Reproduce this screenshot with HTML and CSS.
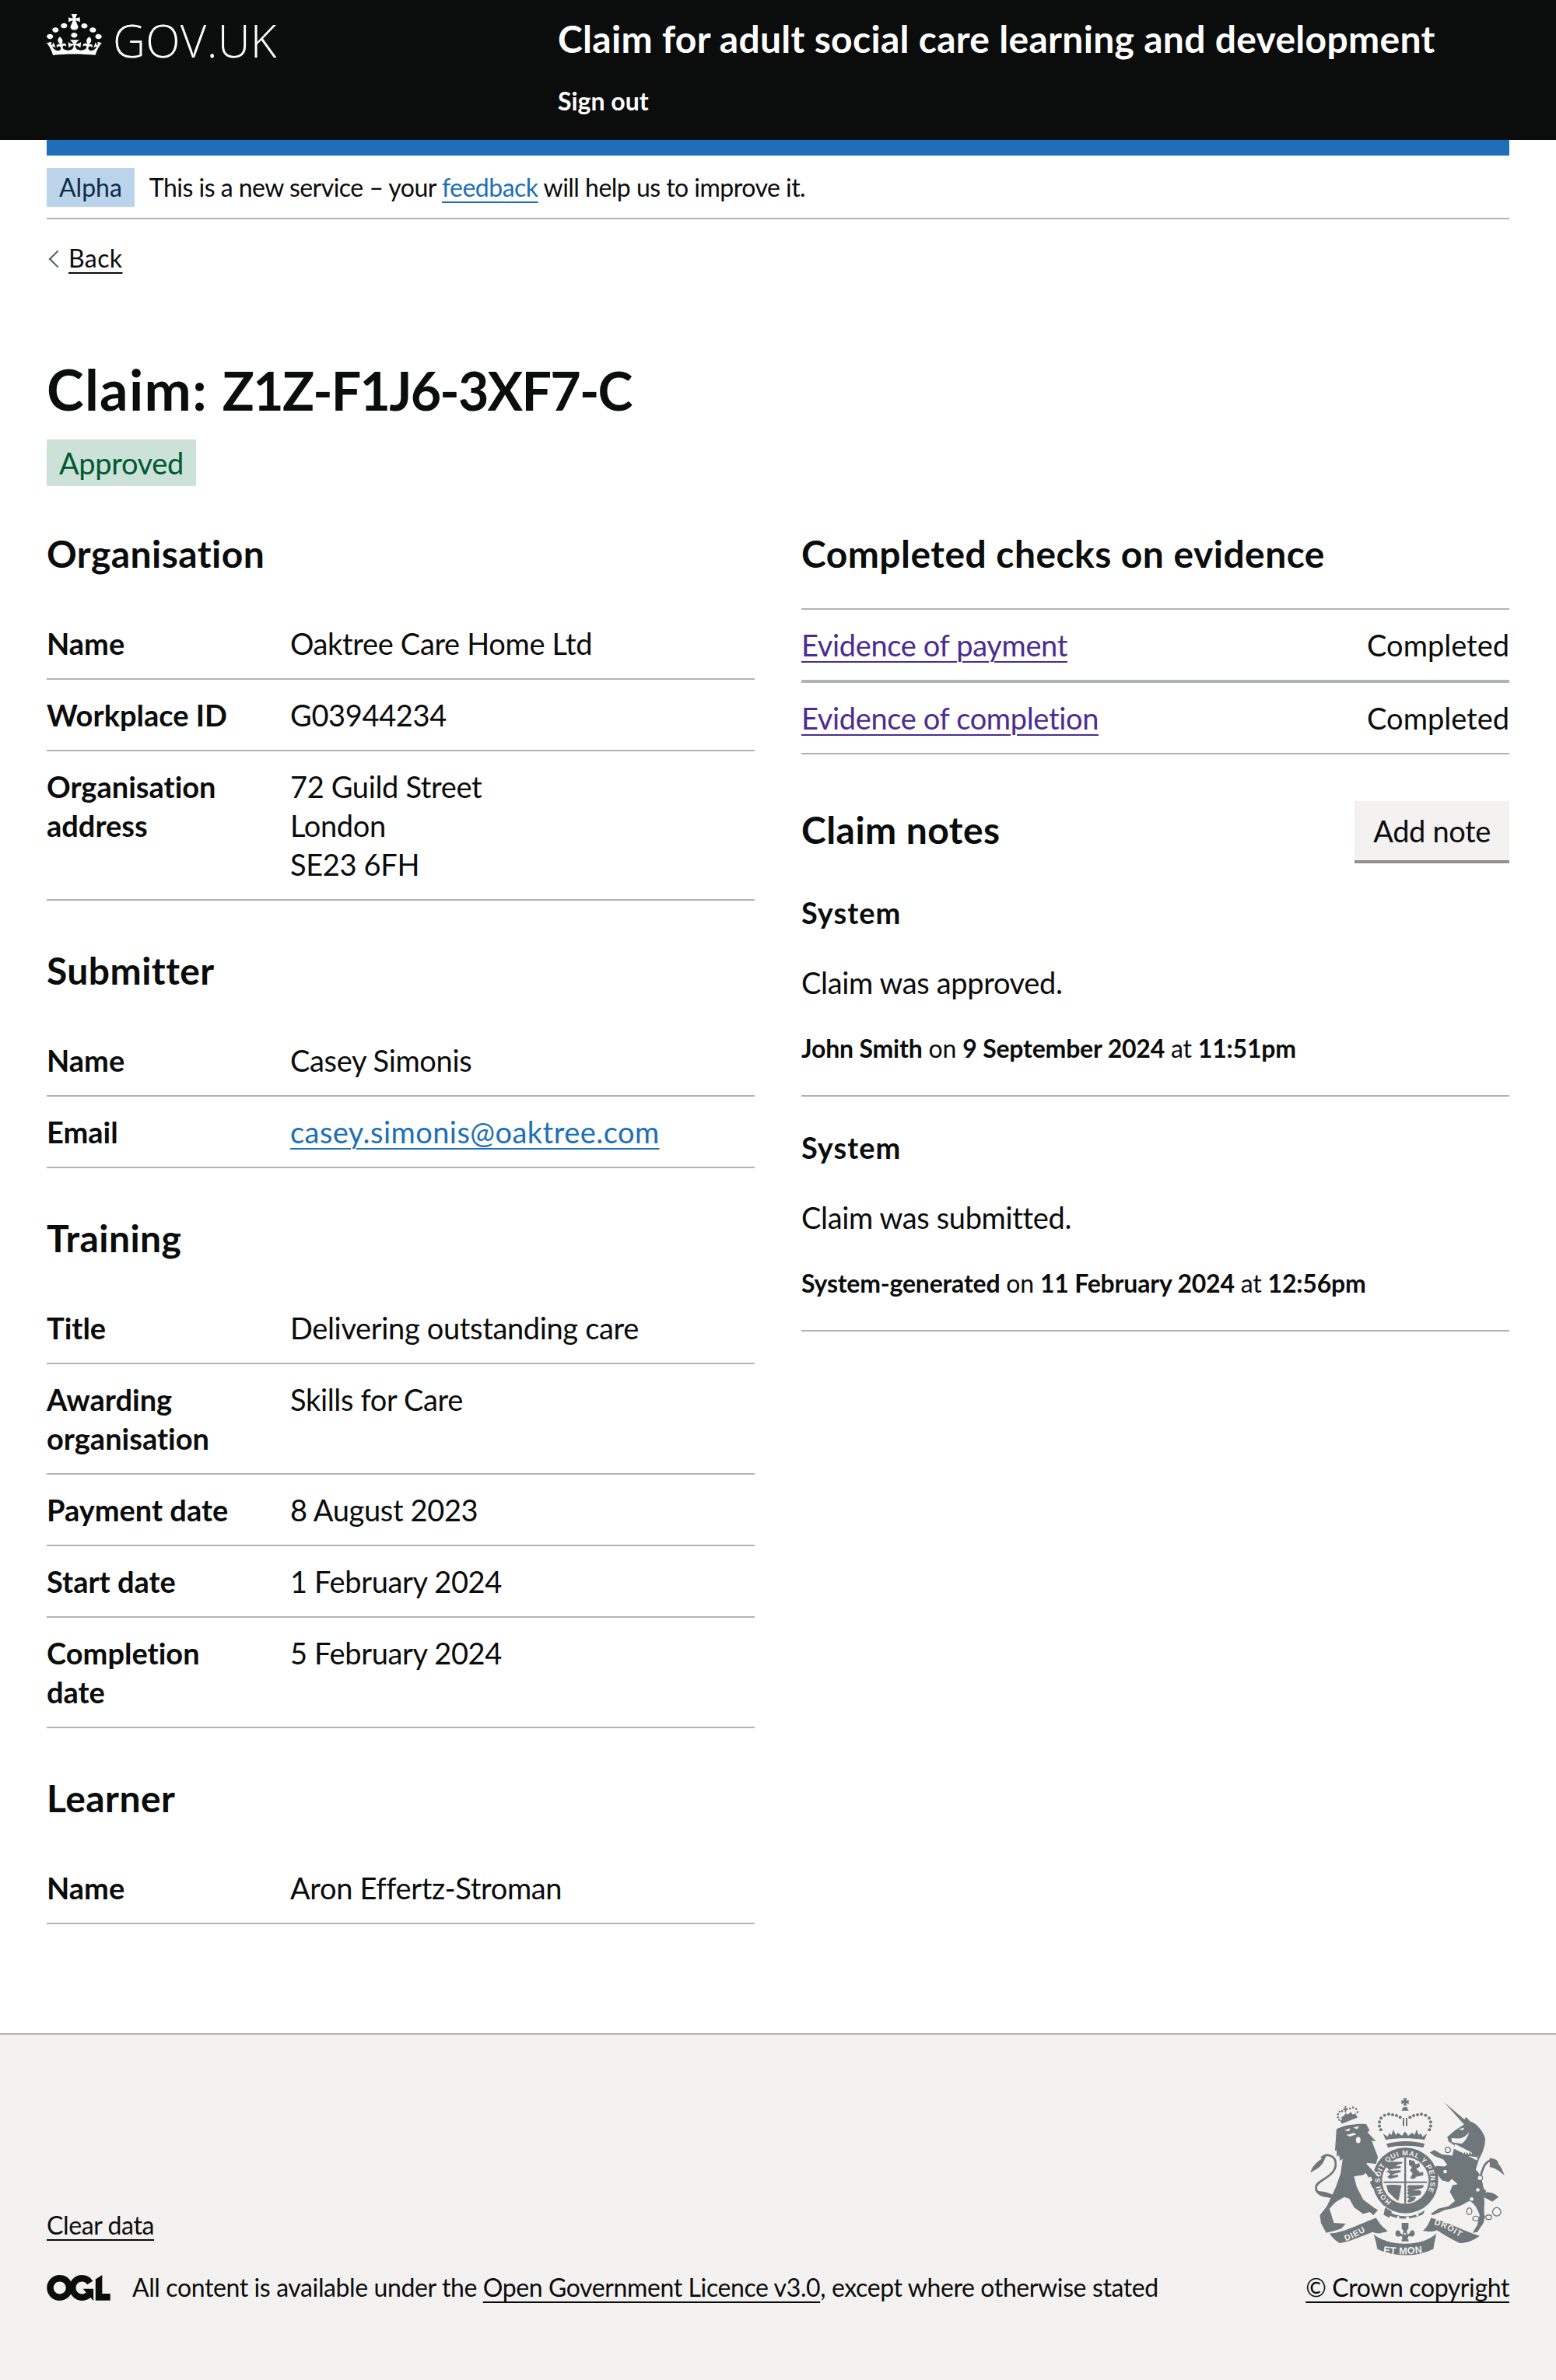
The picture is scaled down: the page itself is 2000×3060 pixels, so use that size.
FILE: index.html
```html
<!DOCTYPE html>
<html lang="en">
<head>
<meta charset="utf-8">
<title>Claim: Z1Z-F1J6-3XF7-C</title>
<link rel="stylesheet" href="styles.css">
</head>
<body>
<header class="site-header">
  <div class="wrap header-inner">
    <a class="logo" href="#">
      <svg class="crown" viewBox="0 -0.5 33 30.5" preserveAspectRatio="none" aria-hidden="true"><path fill="#fff" d="M22.6 10.4c-1 .4-2-.1-2.4-1-.4-.9.1-2 1-2.4.9-.4 2 .1 2.4 1s-.1 2-1 2.4m-5.9 6.7c-.9.4-2-.1-2.4-1-.4-.9.1-2 1-2.4.9-.4 2 .1 2.4 1s-.1 2-1 2.4m10.8-3.7c-1 .4-2-.1-2.4-1-.4-.9.1-2 1-2.4.9-.4 2 .1 2.4 1s0 2-1 2.4m3.3 4.8c-1 .4-2-.1-2.4-1-.4-.9.1-2 1-2.4.9-.4 2 .1 2.4 1s-.1 2-1 2.4M17 4.7l2.3 1.2V2.5l-2.3.7-.2-.2.9-3h-3.4l.9 3-.2.2c-.1.1-2.3-.7-2.3-.7v3.4L15 4.7c.1.1.1.2.2.2l-1.3 4c-.1.2-.1.4-.1.6 0 1.1.8 2 1.9 2.2h.7c1-.2 1.9-1.1 1.9-2.2 0-.2 0-.4-.1-.6l-1.3-4c-.1-.1 0-.2.1-.3m-7.6 5.7c.9.4 2-.1 2.4-1 .4-.9-.1-2-1-2.4-.9-.4-2 .1-2.4 1s0 2 1 2.4m-5 3c.9.4 2-.1 2.4-1 .4-.9-.1-2-1-2.4-.9-.4-2 .1-2.4 1s.1 2 1 2.4m-3.2 4.8c.9.4 2-.1 2.4-1 .4-1-.1-2-1-2.4-.9-.3-2 .1-2.4 1-.4.9.1 2 1 2.4m14.8 11c4.4 0 8.6.3 12.3.8 1.1-4.5 2.4-7 3.7-8.8l-2.5-.9c.2 1.3.3 1.9 0 2.7-.4-.4-.8-1.1-1.1-2.3l-1.2 4c.7-.5 1.3-.8 2-.9-1.1 2.5-2.6 3.1-3.5 3-1.1-.2-1.7-1.2-1.5-2.1.3-1.2 1.5-1.5 2.1-.1 1.1-2.3-.8-3-2-2.3 1.9-1.9 2.1-3.5.6-5.6-2.1 1.6-2.1 3.2-1.2 5.5-1.2-1.4-3.2-.6-2.5 1.6.9-1.4 2.1-.5 1.9.8-.2 1.1-1.7 2.1-3.5 1.9-2.7-.2-2.9-2.1-2.9-3.6.7-.1 1.9.5 2.9 1.9l.4-4.3c-1.1 1.1-2.1 1.4-3.2 1.4.4-1.2 2.1-3 2.1-3h-5.4s1.7 1.9 2.1 3c-1.1 0-2.1-.2-3.2-1.4l.4 4.3c1-1.4 2.2-2 2.9-1.9-.1 1.5-.2 3.4-2.9 3.6-1.9.2-3.4-.8-3.5-1.9-.2-1.3 1-2.2 1.9-.8.7-2.3-1.2-3-2.5-1.6.9-2.2.9-3.9-1.2-5.5-1.5 2-1.3 3.7.6 5.6-1.2-.7-3.1 0-2 2.3.6-1.4 1.8-1.1 2.1.1.2.9-.3 1.9-1.5 2.1-.9.2-2.4-.5-3.5-3 .6 0 1.2.3 2 .9l-1.2-4c-.3 1.1-.7 1.9-1.1 2.3-.3-.8-.2-1.4 0-2.7l-2.9.9C1.3 23 2.6 25.5 3.7 30c3.7-.5 7.9-.8 12.3-.8"/></svg>
      <span class="logo-text">GOV.UK</span>
    </a>
    <div class="service">
      <a class="service-name" href="#">Claim for adult social care learning and development</a>
      <a class="sign-out" href="#">Sign out</a>
    </div>
  </div>
</header>

<div class="wrap">
  <div class="phase-banner">
    <strong class="phase-tag">Alpha</strong>
    <span class="phase-text">This is a new service – your <a class="link" href="#">feedback</a> will help us to improve it.</span>
  </div>
  <a class="back-link" href="#">Back</a>

  <main class="main">
    <h1 class="title">Claim: <span class="claim-id">Z1Z-F1J6-3XF7-C</span></h1>
    <strong class="status-tag">Approved</strong>

    <div class="columns">
      <div class="col">
        <h2 class="heading">Organisation</h2>
        <dl class="summary">
          <div class="row"><dt>Name</dt><dd>Oaktree Care Home Ltd</dd></div>
          <div class="row"><dt>Workplace ID</dt><dd>G03944234</dd></div>
          <div class="row"><dt>Organisation address</dt><dd>72 Guild Street<br>London<br>SE23 6FH</dd></div>
        </dl>
        <h2 class="heading">Submitter</h2>
        <dl class="summary">
          <div class="row"><dt>Name</dt><dd>Casey Simonis</dd></div>
          <div class="row"><dt>Email</dt><dd><a class="link email" href="#">casey.simonis@oaktree.com</a></dd></div>
        </dl>
        <h2 class="heading">Training</h2>
        <dl class="summary">
          <div class="row"><dt>Title</dt><dd>Delivering outstanding care</dd></div>
          <div class="row"><dt>Awarding organisation</dt><dd>Skills for Care</dd></div>
          <div class="row"><dt>Payment date</dt><dd>8 August 2023</dd></div>
          <div class="row"><dt>Start date</dt><dd>1 February 2024</dd></div>
          <div class="row"><dt>Completion date</dt><dd>5 February 2024</dd></div>
        </dl>
        <h2 class="heading">Learner</h2>
        <dl class="summary">
          <div class="row"><dt>Name</dt><dd>Aron Effertz-Stroman</dd></div>
        </dl>
      </div>

      <div class="col">
        <h2 class="heading">Completed checks on evidence</h2>
        <ul class="checks">
          <li class="check"><a class="link visited" href="#">Evidence of payment</a><span class="check-status">Completed</span></li>
          <li class="check"><a class="link visited" href="#">Evidence of completion</a><span class="check-status">Completed</span></li>
        </ul>
        <div class="notes-head">
          <h2 class="heading notes-title">Claim notes</h2>
          <a class="button" href="#">Add note</a>
        </div>
        <article class="note">
          <h3 class="note-title">System</h3>
          <p class="note-body">Claim was approved.</p>
          <p class="note-meta"><b>John Smith</b> on <b>9 September 2024</b> at <b>11:51pm</b></p>
        </article>
        <article class="note">
          <h3 class="note-title">System</h3>
          <p class="note-body">Claim was submitted.</p>
          <p class="note-meta"><b>System-generated</b> on <b>11 February 2024</b> at <b>12:56pm</b></p>
        </article>
      </div>
    </div>
  </main>
</div>

<footer class="footer">
  <div class="wrap footer-inner">
    <div class="footer-left">
      <a class="foot-link clear" href="#">Clear data</a>
      <div class="licence">
        <svg class="ogl" viewBox="0 0 483.2 195.7" aria-hidden="true"><path fill="#0b0c0c" d="M421.5 142.8V.1l-50.7 32.3v161.1h112.4v-50.7zm-122.3-9.6A47.12 47.12 0 0 1 221 97.8c0-26 21.1-47.1 47.1-47.1 16.7 0 31.4 8.7 39.7 21.8l42.7-27.2A97.63 97.63 0 0 0 268.1 0c-36.5 0-68.3 20.1-85.1 49.7A98 98 0 0 0 97.8 0C43.9 0 0 43.9 0 97.8s43.9 97.8 97.8 97.8c36.5 0 68.3-20.1 85.1-49.7a97.76 97.76 0 0 0 149.6 25.4l19.4 22.2h3v-87.8h-80l24.3 27.5zM97.8 145c-26 0-47.1-21.1-47.1-47.1s21.1-47.1 47.1-47.1 47.2 21 47.2 47S123.8 145 97.8 145"/></svg>
        <span>All content is available under the <a class="foot-link" href="#">Open Government Licence v3.0</a>, except where otherwise stated</span>
      </div>
    </div>
    <div class="footer-right">
      <svg class="crest" viewBox="125 100 765 625" aria-hidden="true">
        <defs>
          <path id="ring" d="M444 507 A97 97 0 1 1 566 495"/>
          <path id="rib-l" d="M268 660 Q320 640 372 604"/>
          <path id="rib-c" d="M412 706 Q495 718 584 702"/>
          <path id="rib-r" d="M608 596 Q670 612 732 664"/>
        </defs>
        <g fill="#6f777b">
          <path d="M490 108h14l-3 10 10-3v15l-10-3 3 10h-14l3-10-10 3v-15l10 3zM483 156l8-14h12l8 14z"/>
          <path d="M488 184h6v32h-6zM500 184h6v32h-6z"/>
          <path d="M412 245l18 12 6-14 8 8 8-22 9 22 8-10 16 12 12-16 12 16 16-12 8 10 9-22 8 22 8-8 6 14 18-12-10 24c-50-8-104-8-150 0z"/>
          <path d="M425 285c44-14 108-14 148 0l-6 14c-40-10-96-10-136 0z"/>
          <g>
            <circle cx="398" cy="200" r="6"/><circle cx="404" cy="185" r="6"/><circle cx="418" cy="174" r="6"/><circle cx="434" cy="170" r="6"/><circle cx="449" cy="172" r="6"/><circle cx="464" cy="175" r="6"/><circle cx="478" cy="182" r="6"/>
            <circle cx="398" cy="216" r="6"/><circle cx="403" cy="230" r="6"/>
            <circle cx="596" cy="200" r="6"/><circle cx="590" cy="185" r="6"/><circle cx="576" cy="174" r="6"/><circle cx="560" cy="170" r="6"/><circle cx="545" cy="172" r="6"/><circle cx="530" cy="175" r="6"/><circle cx="516" cy="182" r="6"/>
            <circle cx="596" cy="216" r="6"/><circle cx="591" cy="230" r="6"/>
          </g>
          <path d="M246 195l62-24 5 12-60 24z"/>
          <path d="M258 148h6v-10h6v10h6v6h-6v8h-6v-8h-6z"/>
          <g>
            <circle cx="238" cy="170" r="4"/><circle cx="244" cy="160" r="4"/><circle cx="254" cy="158" r="4"/><circle cx="284" cy="148" r="4"/><circle cx="296" cy="144" r="4"/><circle cx="308" cy="150" r="4"/><circle cx="313" cy="162" r="4"/><circle cx="238" cy="182" r="4"/><circle cx="243" cy="192" r="4"/>
          </g>
          <path d="M250 183l12-8 6-10 8 6 12-10 6 10 14-6-6 14-46 16z"/>
          <path d="M232 228C260 210 320 205 347 208l13 24-8 8 33 35-17-3 24 63-7 27-35-4 30 37 18 50-3 20-23-10-20-40-17-10-35 7 10 38 25 50 40 30 17 10-17 20-15-12-25 7-35-25-18-33-20-7-34 20-23 25 17 55 46 3-18 19-32 10-26 6-20-38-4-30 27-35 33-70 20-55 8-58-10 8-4-22-8 6-2-26-6 4 2-24z"/>
          <path fill="none" stroke="#6f777b" stroke-width="8" d="M215 484c-32 8-62-6-62-32 0-28 76-38 76-90 0-34-38-44-56-22"/>
          <path d="M132 396c4-22 24-42 44-54l18-18c-6 22-16 40-28 50-10 8-24 14-34 22z"/>
          <path d="M148 464l42 6 42 16-26 8-34-10z"/>
          <path d="M648 124l78 66 7-9 15 17c24 6 48 34 58 64 2 28-10 58-24 83l-12 40c20 15 32 55 33 115 2 30-5 45 3 65l-6 25-24 35-18 3 18-30 9-38c-10-30-25-50-40-55-25 15-55 30-95 35l-45 20-9-5 29-20 40-10 25-20-20-35 10-25 20-5-22-20-13 12-25-7-25-30-10-17 15-8 30 2 10-7-15-20-33-13-20-14 18-10 30 17 40 5 8-40-23-15-5-17 30-26 35-22z"/>
          <path fill="none" stroke="#6f777b" stroke-width="8" d="M808 470c-28-22-22-60-10-90 12-30 40-46 56-22"/>
          <path d="M824 338c24 6 44 30 57 68-18-14-32-28-57-32z"/>
          <path d="M798 470c22 2 38-2 60 20l-24 18-30-16z"/>
          <circle cx="498" cy="426" r="127"/>
          <path d="M425 540c40 32 110 32 148 0l-6 16c-40 22-98 24-136 2z"/>
          <path d="M420 530l-6 28 22 12 10-24z"/>
          <path d="M205 630c50 0 125-40 180-60 10 20 30 40 45 52-20 6-35 13-58 3-42 15-82 35-127 43-15-8-30-23-40-38z"/>
          <path stroke="#f3f2f1" stroke-width="4" d="M372 628c28 27 78 40 125 40 48 0 93-13 125-43-7 25-12 55-14 67-68 33-153 33-220 0-3-22-8-42-16-64z"/>
          <path d="M565 620c15-10 25-30 32-50 63 15 123 50 188 70-25 20-55 28-77 28-38-18-68-38-88-50-20 7-35 7-55 2z"/>
          <path d="M484 590h26v22l-7 8 4 16 10-10c-2-8 12-12 16-2 4 10-2 20-12 18l-10-2-5 12 6 4-4 6-9 0-2-4-2 4-9 0-4-6 6-4-5-12-10 2c-10 2-16-8-12-18 4-10 18-6 16 2l10 10 4-16-7-8z"/>
        </g>
        <g fill="none" stroke="#6f777b" stroke-width="4">
          <circle cx="662" cy="308" r="10"/><circle cx="652" cy="392" r="10"/><circle cx="786" cy="416" r="10"/>
          <ellipse cx="745" cy="545" rx="10" ry="13"/><ellipse cx="770" cy="573" rx="12" ry="9"/><ellipse cx="820" cy="568" rx="11" ry="9"/><circle cx="851" cy="547" r="16"/>
        </g>
        <g fill="#f3f2f1">
          <path d="M262 232l24-8-6 12zM296 222l24-6-8 12zM270 250l30-8 8 6-24 8z"/>
          <ellipse cx="316" cy="270" rx="9" ry="12"/>
          <path d="M350 358l48 50-4 4-46-50z"/>
          <path d="M300 410l35-5 10-8 12 18 8-4 6 14-8 4-2 12-14-10-14-16-30 4z"/>
          <path d="M704 228l22-6-6 10zM676 262l28 2c16-2 30-10 40-26-4 22-18 40-30 46l-36-6z"/>
          <path d="M690 285l90 46-5 18-90-46z"/>
          <circle cx="778" cy="462" r="7"/><circle cx="754" cy="498" r="7"/><circle cx="786" cy="416" r="8"/>
          <circle cx="662" cy="308" r="7"/><circle cx="652" cy="392" r="7"/>
          <circle cx="498" cy="426" r="90"/>
          <circle cx="470" cy="568" r="5"/><circle cx="507" cy="572" r="7"/><circle cx="545" cy="560" r="5"/>
          <circle cx="496" cy="632" r="4"/>
        </g>
        <g fill="#6f777b">
          <path d="M772 335l8 8-4-16 6 4-4-14-5 8-5-10-5 10-6-12-4 14-6-12-5 12-6-12-4 12-6-12-4 12-8-12-3 12-8-10 1 10z"/>
          <path d="M494 336h7v180h-7zM414 430h168v6H414z"/>
          <path d="M428 354h58v6l-14 4-12 8 20-2v8l-32 4-14 4 14 2 32-2v8l-24 6-12 6 26-2v8l-32 8-10-8 12-10-6-6-10-2 10-8-4-8-8-2 8-12z"/>
          <path d="M512 346l20 4 6 14 14-6 2 14-14 10 16 14 10-4 2 14-28 6-8 8-16-2 10-18-10-14 8-12-12-8z"/>
          <path d="M424 444c20-4 48 0 58 0l0 6c-4 20-6 40-12 56l-14-12-24-24z"/>
          <path d="M510 444h60l-4 10-18 6-24 4 32 0 4 6-4 12-28 4-16 2 28 2-8 14-20 8-6-6 8-10-10-4 8-10-8-6 6-8-6-6 8-6-8-4z"/>
        </g>
        <g fill="#f3f2f1" font-family="'Liberation Sans', sans-serif" font-weight="700">
          <text font-size="27" letter-spacing="2.5"><textPath href="#ring">HONI SOIT QUI MAL Y PENSE</textPath></text>
          <text font-size="32" letter-spacing="3"><textPath href="#rib-l">DIEU</textPath></text>
          <text font-size="38" letter-spacing="1"><textPath href="#rib-c">ET MON</textPath></text>
          <text font-size="32" letter-spacing="3"><textPath href="#rib-r">DROIT</textPath></text>
        </g>
      </svg>
      <a class="foot-link" href="#">© Crown copyright</a>
    </div>
  </div>
</footer>
</body>
</html>
```

FILE: styles.css
```css
* { box-sizing: border-box; }
html, body { margin: 0; padding: 0; }
body {
  font-family: Lato, "Noto Sans", sans-serif;
  font-size: 38px;
  line-height: 50px;
  letter-spacing: -0.35px;
  font-variant-ligatures: none;
  color: #0b0c0c;
  background: #fff;
}
a { color: inherit; }
.wrap { width: 1880px; margin: 0 60px; }

.site-header { background: #0b0c0c; color: #fff; height: 180px; }
.header-inner { display: flex; }
.logo { display: flex; flex: none; align-items: flex-start; width: 657px; padding-top: 17px; text-decoration: none; color: #fff; }
.crown { width: 73px; height: 54px; display: block; flex: none; }
.logo-text { font-family: "Open Sans", sans-serif; font-weight: 300; font-size: 58px; line-height: 70px; letter-spacing: 0.3px; margin-left: 12px; }
.service { display: flex; flex-direction: column; align-items: flex-start; padding-top: 20px; white-space: nowrap; }
.service-name { font-weight: 700; font-size: 48px; line-height: 60px; letter-spacing: 0.3px; text-decoration: none; }
.sign-out { font-weight: 700; font-size: 32px; line-height: 40px; letter-spacing: 0; margin-top: 30px; text-decoration: none; }

.phase-banner { border-top: 20px solid #1d70b8; border-bottom: 2px solid #b1b4b6; padding: 16px 0 14px; display: flex; align-items: center; font-size: 32px; line-height: 50px; letter-spacing: -0.52px; }
.phase-tag { background: #bbd4ea; color: #0c2d4a; font-weight: 400; letter-spacing: 0; padding: 0 16px; margin-right: 19px; }
.link { color: #1d70b8; text-decoration: underline; text-decoration-thickness: 2px; text-underline-offset: 6px; }
.link.visited { color: #4c2c92; }
.link.email { letter-spacing: 0.45px; }
.back-link { display: inline-block; position: relative; margin-top: 30px; padding-left: 28px; font-size: 32px; line-height: 40px; letter-spacing: 0.4px; text-decoration: underline; text-decoration-thickness: 2px; text-underline-offset: 6px; }
.back-link::before { content: ""; position: absolute; left: 6px; top: 13px; width: 14px; height: 14px; border-left: 2px solid #505a5f; border-bottom: 2px solid #505a5f; transform: rotate(45deg); }

.main { padding-top: 106px; padding-bottom: 140px; }
.title { margin: 0 0 23px; font-size: 72px; line-height: 80px; font-weight: 700; letter-spacing: 1.3px; }
.claim-id { font-size: 68px; letter-spacing: -1.75px; }
.status-tag { display: inline-block; background: #cce2d8; color: #005a30; font-weight: 400; padding: 5px 16px; vertical-align: top; }

.columns { display: grid; grid-template-columns: 910px 910px; column-gap: 60px; margin-top: 57px; }
.heading { margin: 0 0 40px; font-size: 48px; line-height: 60px; font-weight: 700; letter-spacing: 0.45px; }

.summary { margin: 0 0 60px; }
.summary:last-child { margin-bottom: 0; }
.row { display: grid; grid-template-columns: 313px 1fr; border-bottom: 2px solid #b1b4b6; padding: 20px 0; }
.row dt { font-weight: 700; padding-right: 40px; letter-spacing: 0; }
.row dd { margin: 0; }

.checks { list-style: none; margin: 0 0 60px; padding: 0; }
.check { display: flex; justify-content: space-between; padding: 20px 0; border-top: 2px solid #b1b4b6; border-bottom: 2px solid #b1b4b6; }
.check-status { letter-spacing: 0; }
.notes-head { display: flex; justify-content: space-between; align-items: center; margin-bottom: 38px; }
.notes-title { margin: 0 0 6px; }
.button { display: block; background: #f3f2f1; box-shadow: 0 4px 0 #929191; padding: 13px 24px; margin-bottom: 4px; text-decoration: none; }
.note { border-bottom: 2px solid #b1b4b6; margin-bottom: 40px; padding-bottom: 40px; }
.note-title { margin: 0; font-size: 38px; line-height: 50px; font-weight: 700; letter-spacing: 1px; }
.note-body { margin: 40px 0 0; }
.note-meta { margin: 40px 0 0; font-size: 32px; line-height: 40px; letter-spacing: -0.2px; }

.footer { background: #f3f2f1; border-top: 2px solid #b1b4b6; height: 446px; font-size: 32px; line-height: 40px; letter-spacing: -0.39px; }
.footer-inner { display: flex; justify-content: space-between; align-items: flex-end; height: 345px; }
.foot-link { text-decoration: underline; text-decoration-thickness: 2px; text-underline-offset: 6px; }
.clear { display: block; margin-bottom: 40px; }
.licence { display: flex; align-items: center; gap: 28px; }
.ogl { width: 82px; height: 33px; display: block; }
.footer-left { display: flex; flex-direction: column; align-items: flex-start; }
.footer-right { display: flex; flex-direction: column; align-items: center; }
.crest { width: 255px; height: 208px; display: block; margin-bottom: 18px; }
```
